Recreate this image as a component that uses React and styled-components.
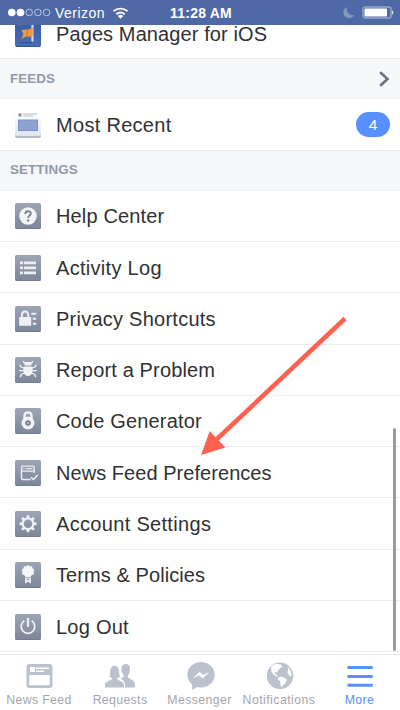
import styled, { createGlobalStyle } from "styled-components";

const GlobalStyle = createGlobalStyle`
  body {
    margin: 0;
    background-color: white;
    font-family: "Liberation Sans", Arial, sans-serif;
  }
`;

const Screen = styled.div`
  position: relative;
  width: 400px;
  height: 710px;
  display: flex;
  flex-direction: column;
  overflow: hidden;
  background-color: white;
`;

const StatusBar = styled.header`
  height: 25px;
  flex: none;
  box-sizing: border-box;
  padding: 0 6px 0 8px;
  display: grid;
  grid-template-columns: 1fr auto 1fr;
  align-items: center;
  color: white;
  background-color: #4e69a5;
`;

const StatusGroup = styled.div`
  display: flex;
  align-items: center;
  justify-content: ${(props) => (props.$end ? "flex-end" : "flex-start")};
  gap: ${(props) => props.$gap}px;
`;

const Carrier = styled.span`
  font-size: 14px;
  line-height: 24px;
  padding-top: 1px;
  letter-spacing: 0.48px;
`;

const WifiIcon = styled.svg`
  width: 18px;
  height: 12px;
  margin-left: 3px;
`;

const Clock = styled.span`
  font-size: 14px;
  line-height: 24px;
  padding-top: 1px;
  font-weight: bold;
  letter-spacing: 0.2px;
`;

const Content = styled.main`
  height: 626px;
  flex: none;
  border-bottom: 1px solid #e9eaec;
`;

const Row = styled.div`
  height: ${(props) => props.$height || 51.27}px;
  box-sizing: border-box;
  padding: ${(props) => (props.$cut ? 0 : 1)}px 10px 0 15px;
  display: flex;
  align-items: ${(props) => (props.$cut ? "flex-start" : "center")};
  border-bottom: 1px solid
    ${(props) => (props.$last ? "transparent" : "#ebecee")};
`;

const RowIcon = styled.svg`
  width: 26px;
  height: ${(props) => props.$height || 26}px;
  flex: none;
`;

const RowLabel = styled.span`
  flex: 1;
  margin-left: 15px;
  font-size: 20px;
  line-height: ${(props) => props.$line || 24}px;
  letter-spacing: ${(props) => props.$spacing || 0}px;
  white-space: nowrap;
  color: #303133;
`;

const Badge = styled.span`
  width: 34px;
  height: 25px;
  border-radius: 13px;
  font-size: 15.5px;
  line-height: 25px;
  text-align: center;
  color: white;
  background-color: #5890ff;
`;

const SectionHeader = styled.div`
  height: ${(props) => props.$height}px;
  box-sizing: border-box;
  padding: 0 10px;
  display: flex;
  align-items: center;
  justify-content: space-between;
  border-bottom: 1px solid #f3f4f6;
  background-color: #f6f7f9;
`;

const SectionTitle = styled.h2`
  margin: 0;
  font-size: 13.4px;
  line-height: 16px;
  letter-spacing: 0.1px;
  color: #9299a9;
`;

const Gradients = styled.svg`
  display: block;
  width: 0;
  height: 0;
`;

const TabBar = styled.nav`
  margin-top: 2px;
  flex: 1;
  display: grid;
  grid-template-columns: 78px 84px 75px 84px 77px;
  border-top: 1px solid #e4e5e8;
`;

const Tab = styled.div`
  display: flex;
  flex-direction: column;
  align-items: center;
  color: ${(props) => (props.$active ? "#5890ff" : "#bcc1ce")};
`;

const TabIcon = styled.svg`
  width: 32px;
  height: 30px;
  margin-top: 6px;
  fill: currentColor;
`;

const TabLabel = styled.span`
  margin-top: 2px;
  font-size: 12.3px;
  line-height: 14px;
  letter-spacing: ${(props) => props.$spacing}px;
  white-space: nowrap;
  color: ${(props) => (props.$active ? "#5890ff" : "#a3a6ab")};
`;

const Scrollbar = styled.div`
  position: absolute;
  top: 428px;
  left: 393px;
  width: 3px;
  height: 223px;
  border-radius: 2px;
  background-color: #9b9b9b;
`;

const Arrow = styled.svg`
  position: absolute;
  top: 310px;
  left: 195px;
  width: 160px;
  height: 150px;
`;

function Tile({ children }) {
  return (
    <RowIcon viewBox="0 0 26 26">
      <rect width="26" height="26" rx="1.5" fill="url(#tile)" />
      <path d="M1 25.5H25" stroke="#747d90" />
      {children}
    </RowIcon>
  );
}

const glyphs = {
  help: (
    <>
      <circle cx="13" cy="13" r="8.7" fill="#f4f5f7" />
      <path
        d="M10.3 11c0-3.8 5.5-3.6 5.5-.5 0 2.2-2.6 2-2.6 4.4"
        fill="none"
        stroke="#7c8598"
        strokeWidth="2"
      />
      <circle cx="13.1" cy="17.5" r="1.25" fill="#7c8598" />
    </>
  ),
  activity: (
    <path
      d="M5 6.5h3v2.7H5zM9 6.5h12v2.7H9zM5 11.5h3v2.7H5zM9 11.5h12v2.7H9zM5 16.5h3v2.7H5zM9 16.5h12v2.7H9z"
      fill="#eceef1"
    />
  ),
  privacy: (
    <>
      <path
        d="M6.9 12V9.3c0-5 6.4-5 6.4 0V12"
        fill="none"
        stroke="#eef0f3"
        strokeWidth="2"
      />
      <path
        d="M4.2 11h12v8.7h-12zM16.2 6.7h5v2h-5zM17.8 11.7h3.4v2h-3.4zM17.8 16.7h3.4v2h-3.4z"
        fill="#eef0f3"
      />
    </>
  ),
  report: (
    <>
      <path
        d="m9.2 11.2-3.6-1.4-.8-2.2M8.2 13.7H4M9 16.2l-2.8 1.2-.9 2.8M16.8 11.2l3.6-1.4.8-2.2M17.8 13.7H22M17 16.2l2.8 1.2.9 2.8M9.6 6 8 4.2M16.4 6 18 4.2"
        fill="none"
        stroke="#eef0f3"
        strokeWidth="1.3"
      />
      <path
        d="M9 5h8l-.8 3.6H9.8zM9.4 9.5h7.2c3 4.5 0 9.5-3.6 9.5s-6.6-5-3.6-9.5z"
        fill="#f2f3f6"
      />
    </>
  ),
  code: (
    <>
      <path
        d="M9.5 11V8.1c0-4.8 7-4.8 7 0V11"
        fill="none"
        stroke="#f0f1f4"
        strokeWidth="2.5"
      />
      <circle cx="13" cy="15" r="6.5" fill="#f3f4f6" />
      <circle cx="13" cy="15" r="2.8" fill="#737c90" />
      <circle cx="13" cy="15" r="1" fill="#c9cdd5" />
    </>
  ),
  feed: (
    <>
      <path
        d="M19.2 13V7.3c0-.8-.4-1.2-1.2-1.2H7.7c-.8 0-1.2.4-1.2 1.2v11c0 .8.4 1.2 1.2 1.2h8M6.5 11.1h12.7M8.3 8.6h1.4M11 8.6h6.4"
        fill="none"
        stroke="#eceef2"
        strokeWidth="1.4"
      />
      <path
        d="m16 17.2 2.5 2.3 4.2-4.4"
        fill="none"
        stroke="#f2f3f6"
        strokeWidth="1.5"
      />
    </>
  ),
  settings: (
    <>
      <circle
        cx="13"
        cy="12.8"
        r="5.3"
        fill="none"
        stroke="#f0f1f4"
        strokeWidth="2"
      />
      {[0, 45, 90, 135, 180, 225, 270, 315].map((angle) => (
        <path
          key={angle}
          d="m11.3 7.4.6-3.1h2.2l.6 3.1z"
          transform={`rotate(${angle} 13 12.8)`}
          fill="#f0f1f4"
        />
      ))}
    </>
  ),
  terms: (
    <>
      <path
        d="m13 2.9 1.8 1.4 2.2-.1.6 2.2 1.8 1.3-.8 2.1.4 2.2-2.1.9-1.3 1.8-2.6.5-2.6-.5-1.3-1.8-2.1-.9.4-2.2-.8-2.1 1.8-1.3.6-2.2 2.2.1z"
        fill="#f6f7f8"
      />
      <path d="M10 15.6h2.2l.8.8.8-.8H16v6.1l-3-2-3 2z" fill="#e9ebef" />
      <path d="m11.7 16.8 1.3 1.1 1.3-1.1" fill="none" stroke="#8992a3" />
    </>
  ),
  logout: (
    <>
      <path
        d="M9.3 6.8a6.8 6.8 0 1 0 7.4 0"
        fill="none"
        stroke="#eff0f3"
        strokeWidth="1.8"
      />
      <path d="M13 4v8.8" stroke="#eff0f3" strokeWidth="2.2" />
    </>
  ),
};

const settings = [
  { icon: "help", label: "Help Center", spacing: 0.15 },
  { icon: "activity", label: "Activity Log", spacing: 0.3 },
  { icon: "privacy", label: "Privacy Shortcuts", spacing: 0.25 },
  { icon: "report", label: "Report a Problem", spacing: 0.15 },
  { icon: "code", label: "Code Generator", spacing: 0.17 },
  { icon: "feed", label: "News Feed Preferences", spacing: 0.05 },
  { icon: "settings", label: "Account Settings", spacing: 0.32 },
  { icon: "terms", label: "Terms & Policies", spacing: 0.08 },
  { icon: "logout", label: "Log Out", spacing: 0.25 },
];

const tabs = [
  {
    label: "News Feed",
    spacing: 0.35,
    icon: (
      <path
        fillRule="evenodd"
        d="M6.5 3h20q3 0 3 3v18q0 3-3 3h-20q-3 0-3-3V6q0-3 3-3zM7 6v5h5V6zM13 6.5V8h13V6.5zM13 9.5V11h8V9.5zM6.2 14v9.5q0 .8.8.8h19q.8 0 .8-.8V14z"
      />
    ),
  },
  {
    label: "Requests",
    spacing: 0.35,
    icon: (
      <>
        <path d="M16.8 17.5c1.5-1 3-1.2 3.1-2.7-2-2.5-2.8-5.5-2.2-8.8.8-4.3 8.1-4.1 8.3.6.1 3.3-.3 6.4-2.4 8.5 0 3.6 7.4 2.6 7.4 8.9v2.6H21.2c-.1-4.8-.7-6.3-4.4-9.1z" />
        <path
          d="M1 26.6V24c0-4 6.8-4.1 7.4-6.7-1.5-.4-3.1-1.2-2.8-2.2 1-3.3-.1-10.3 4.8-10.3 5.4 0 4.2 6.8 5.3 10.1.3 1-1 1.9-2.9 2.4.6 2.8 7.1 2.5 7.1 6.7v2.6z"
          stroke="white"
          strokeWidth="1.4"
          paintOrder="stroke"
        />
      </>
    ),
  },
  {
    label: "Messenger",
    spacing: 0.4,
    icon: (
      <>
        <path d="M17 1C9.4 1 3.3 6.6 3.3 13.7c0 4.1 1.9 7.6 4.9 9.9v5.6l4.6-3.2c1.3.3 2.7.5 4.2.5 7.6 0 13.7-5.7 13.7-12.8S24.6 1 17 1z" />
        <path
          d="m8.6 17.6 7-6.9 3.7 3.3 6.3-3.3-6.9 6.9-3.6-3.3z"
          fill="white"
        />
      </>
    ),
  },
  {
    label: "Notifications",
    spacing: 0.45,
    icon: (
      <>
        <circle cx="17" cy="14.8" r="13.2" />
        <path
          d="M7.9 6.2c1-1.4 2.6-2.6 4.6-3.3l5.4.4 1.6 3.2-2.4.6-2 2.3-.8 2.1-2.1-.4-.5 1.8 2.1.7 1 2.4-4.2-2.2-2.1-3.4zM15.2 16.6l2.7-1.1 3.2 1 3 2.6-1.9 3.5-3.6 3.1-.9-.3-.5-5.2-2.3-1.7zM24.3 5.4c2.9 2.3 4.6 6.4 4 10.1l-2-.7-2-3.6.9-2.7z"
          fill="white"
        />
      </>
    ),
  },
  {
    label: "More",
    spacing: 0.4,
    active: true,
    icon: (
      <path d="M3.5 5h25.2v3H3.5zM3.5 14h25.2v3H3.5zM3.5 22.8h25.2v3H3.5z" />
    ),
  },
];

function StatusIcons() {
  return (
    <StatusGroup $end $gap={7}>
      <svg width="12" height="13" viewBox="0 0 12 13">
        <path
          d="M4.1 1A5.7 5.7 0 1 0 11.2 8.8C7 10.6 2.5 6 4.1 1z"
          fill="#8497c1"
        />
      </svg>
      <svg width="32" height="13" viewBox="0 0 32 13">
        <rect
          x="1"
          y="1"
          width="28"
          height="11"
          rx="1.5"
          fill="none"
          stroke="#bfc9df"
        />
        <rect x="2.5" y="2.5" width="22.5" height="8" rx=".4" fill="white" />
        <path d="M30 4.5c1.8.1 1.8 4 0 4z" fill="#e0e5ef" />
      </svg>
    </StatusGroup>
  );
}

// only the lower part is visible, the rest has scrolled under the status bar
function PagesIcon() {
  return (
    <RowIcon viewBox="0 4 26 22" $height={22}>
      <defs>
        <linearGradient id="pages" x2="0" y2="1">
          <stop stopColor="#365ca8" />
          <stop offset="1" stopColor="#496eb4" />
        </linearGradient>
      </defs>
      <rect width="26" height="26" rx="2" fill="url(#pages)" />
      <path d="M1 25.4H25" stroke="#365492" />
      <path d="M16.4 4h2.1v16.5h-2.1z" fill="#d4dded" />
      <path
        d="m6.5 9 4-.6 2.5.3 4.8-2.2v8.3l-4 1-2.4-.2-4.8 2.1 1.8-4.4z"
        fill="#f0973d"
      />
      <path d="m11.6 8.6 1.4.1v7l-1.4-.2z" fill="#d8822c" />
      <path d="M5.6 21.7h12" stroke="#284986" strokeDasharray="3 1" />
    </RowIcon>
  );
}

function RecentIcon() {
  return (
    <RowIcon viewBox="0 0 26 26">
      <defs>
        <linearGradient id="paper" x2="0" y2="1">
          <stop stopColor="white" />
          <stop offset="1" stopColor="#dfe4ee" />
        </linearGradient>
      </defs>
      <rect y="1" width="26" height="25" rx="2" fill="#b4bac7" />
      <rect width="26" height="24" rx="2" fill="url(#paper)" />
      <path d="M3.5 1.3h3v3.2h-3z" fill="#8992a4" />
      <path d="M8.2 2h14M8.2 4h10" stroke="#b7becb" />
      <rect
        x="3.5"
        y="8"
        width="19"
        height="10.5"
        fill="#8fa3d0"
        stroke="#7b93c5"
      />
    </RowIcon>
  );
}

function App() {
  return (
    <Screen>
      <GlobalStyle />
      <StatusBar>
        <StatusGroup $gap={4}>
          <svg width="43" height="9" viewBox="0 0 43 9">
            {[3.8, 12.5, 21.2, 29.9, 38.6].map((x, i) => (
              <circle
                key={x}
                cx={x}
                cy="4.5"
                r={i < 2 ? 3.8 : 3.3}
                fill={i < 2 ? "white" : "none"}
                stroke={i < 2 ? "none" : "#d4dbea"}
                strokeWidth=".8"
              />
            ))}
          </svg>
          <Carrier>Verizon</Carrier>
          <WifiIcon viewBox="0 0 18 12">
            <path
              d="M1.5 4.2a11 11 0 0 1 14 0M4.3 7.2a6.7 6.7 0 0 1 8.4 0"
              fill="none"
              stroke="white"
              strokeWidth="1.8"
            />
            <path d="M5.7 8.9a4.3 4.3 0 0 1 5.6 0l-2.8 2.9z" fill="white" />
          </WifiIcon>
        </StatusGroup>
        <Clock>11:28 AM</Clock>
        <StatusIcons />
      </StatusBar>
      <Content>
        <Row $height={34} $cut>
          <PagesIcon />
          <RowLabel $spacing={0.1} $line={18}>
            Pages Manager for iOS
          </RowLabel>
        </Row>
        <SectionHeader $height={40}>
          <SectionTitle>FEEDS</SectionTitle>
          <svg width="11" height="16" viewBox="0 0 11 16">
            <path
              d="m2 2 6.5 6L2 14"
              fill="none"
              stroke="#6c7382"
              strokeWidth="2.7"
              strokeLinecap="round"
            />
          </svg>
        </SectionHeader>
        <Row $height={51.8}>
          <RecentIcon />
          <RowLabel $spacing={0.3}>Most Recent</RowLabel>
          <Badge>4</Badge>
        </Row>
        <SectionHeader $height={40}>
          <SectionTitle>SETTINGS</SectionTitle>
        </SectionHeader>
        <Gradients>
          <defs>
            <linearGradient id="tile" x2="0" y2="1">
              <stop stopColor="#9da5b5" />
              <stop offset="1" stopColor="#7d869a" />
            </linearGradient>
          </defs>
        </Gradients>
        {settings.map((item, i) => (
          <Row key={item.icon} $last={i === settings.length - 1}>
            <Tile>{glyphs[item.icon]}</Tile>
            <RowLabel $spacing={item.spacing}>{item.label}</RowLabel>
          </Row>
        ))}
      </Content>
      <TabBar>
        {tabs.map((tab) => (
          <Tab key={tab.label} $active={tab.active}>
            <TabIcon viewBox="0 0 32 30">{tab.icon}</TabIcon>
            <TabLabel $spacing={tab.spacing} $active={tab.active}>
              {tab.label}
            </TabLabel>
          </Tab>
        ))}
      </TabBar>
      <Scrollbar />
      <Arrow viewBox="195 310 160 150">
        <path d="M345 318.5 217 439" stroke="#ff6050" strokeWidth="4.5" />
        <path d="m201 455 8.8-24 15.5 16.5z" fill="#ff6050" />
      </Arrow>
    </Screen>
  );
}

export default App;
